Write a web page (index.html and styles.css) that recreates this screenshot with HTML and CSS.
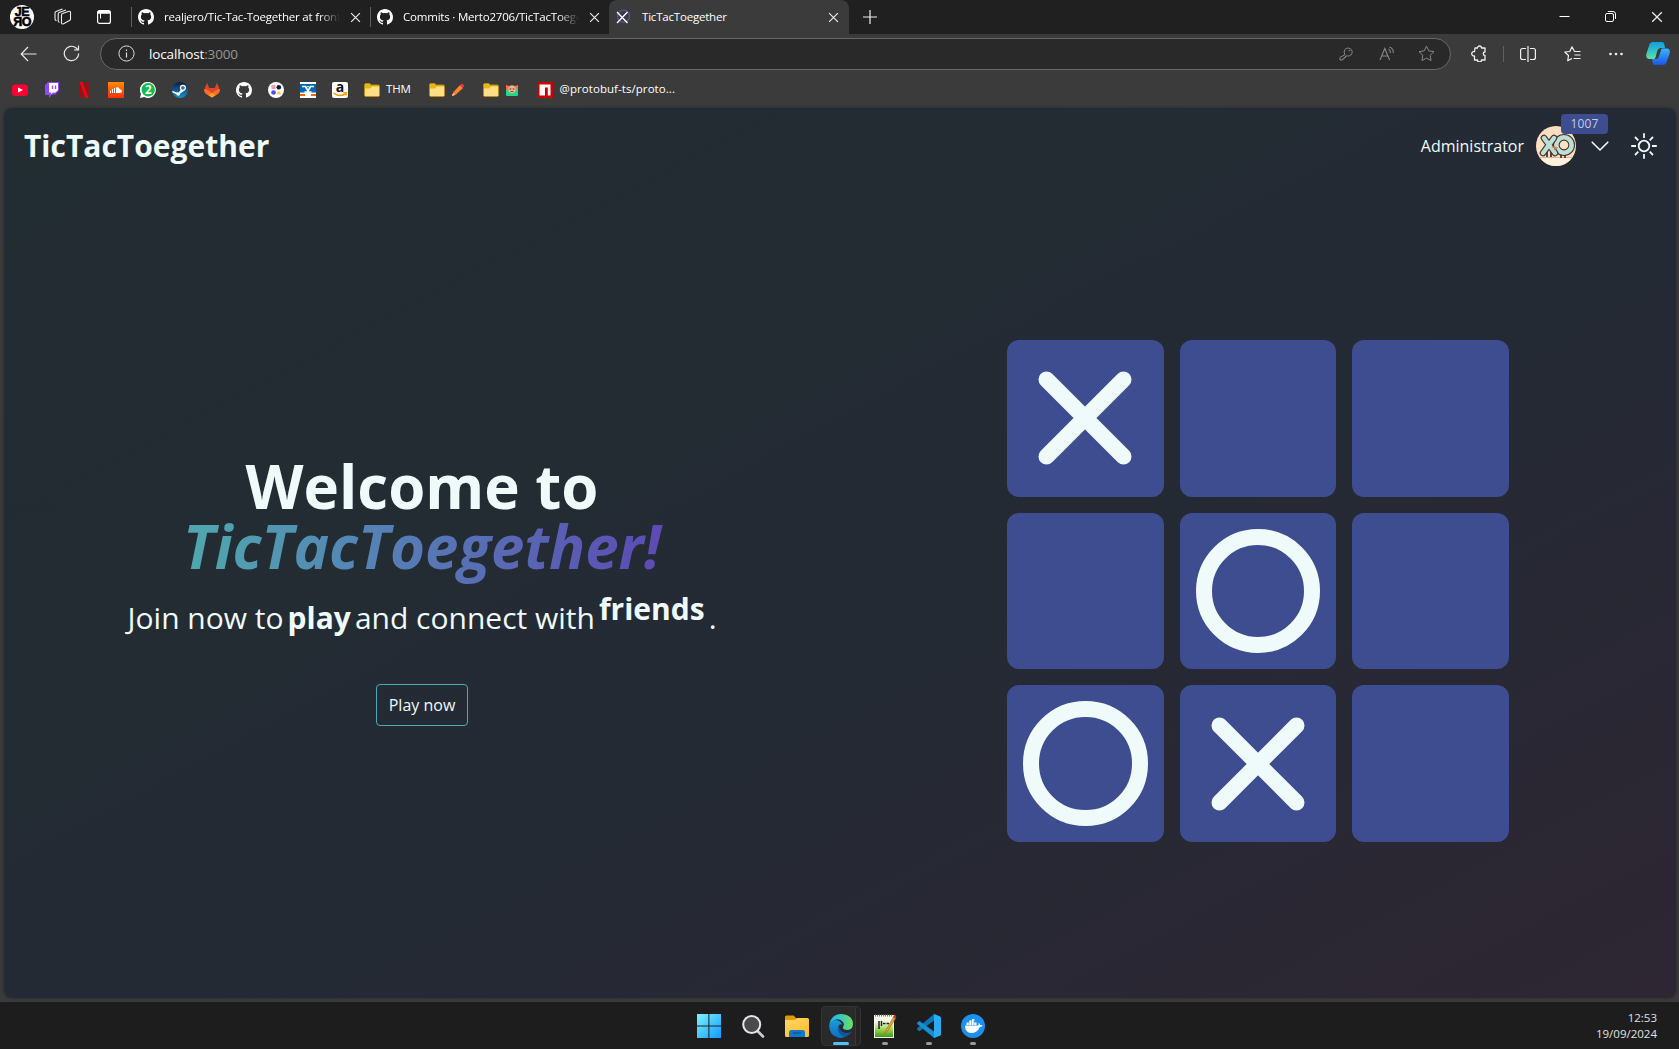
FILE: index.html
```html
<!DOCTYPE html>
<html lang="en">
<head>
<meta charset="utf-8">
<title>TicTacToegether</title>
<link rel="stylesheet" href="styles.css">
</head>
<body>
<svg width="0" height="0" class="defs" aria-hidden="true">
  <defs>
    <symbol id="github" viewBox="0 0 16 16"><path fill="#fff" d="M8 0C3.58 0 0 3.58 0 8c0 3.54 2.29 6.53 5.47 7.59.4.07.55-.17.55-.38v-1.34c-2.23.48-2.7-1.07-2.7-1.07-.36-.93-.89-1.18-.89-1.18-.73-.5.06-.49.06-.49.8.06 1.23.83 1.23.83.71 1.22 1.87.87 2.33.66.07-.52.28-.87.51-1.07-1.78-.2-3.64-.89-3.64-3.95 0-.87.31-1.59.82-2.15-.08-.2-.36-1.02.08-2.12 0 0 .67-.21 2.2.82a7.6 7.6 0 0 1 4 0c1.53-1.04 2.2-.82 2.2-.82.44 1.1.16 1.92.08 2.12.51.56.82 1.27.82 2.15 0 3.07-1.87 3.75-3.65 3.95.29.25.54.73.54 1.48v2.2c0 .21.15.46.55.38A8 8 0 0 0 16 8c0-4.42-3.58-8-8-8z"/></symbol>
    <symbol id="close" viewBox="0 0 10 10"><path d="M1 1l8 8M9 1L1 9" fill="none" stroke="#e8e8e8" stroke-width="1.1"/></symbol>
    <symbol id="folder" viewBox="0 0 16 14"><path d="M.5 2C.5 1 1 .5 2 .5h3.5L7.5 2H14c1 0 1.5.5 1.5 1.5V12c0 1-.5 1.5-1.5 1.5H2c-1 0-1.5-.5-1.5-1.5z" fill="#e8b51f" stroke="#b88d14"/><path d="M1 5.500h5L8 3.500h7V12.500q0 .5-.5.5h-13q-.5 0-.5-.5z" fill="#ffdf83"/></symbol>
    <symbol id="cross" viewBox="0 0 94 94"><path d="M8.500 8.500l77 77M85.500 8.500l-77 77" fill="none" stroke="#effafb" stroke-width="16" stroke-linecap="round"/></symbol>
    <linearGradient id="edgeA" x1="0" y1="0" x2="1" y2="0"><stop offset="0" stop-color="#23b7d8"/><stop offset=".4" stop-color="#30c5d0"/><stop offset="1" stop-color="#6fe05a"/></linearGradient>
    <linearGradient id="edgeB" x1="0" y1="0" x2="0" y2="1"><stop offset="0" stop-color="#1a9bdc"/><stop offset="1" stop-color="#0c6fc4"/></linearGradient>
    <linearGradient id="win" x1="0" y1="0" x2="1" y2="1"><stop offset="0" stop-color="#7cf2ff"/><stop offset="1" stop-color="#119aff"/></linearGradient>
    <linearGradient id="pilotA" x1="0" y1="0" x2="0" y2="1"><stop offset="0" stop-color="#0b9ee8"/><stop offset="1" stop-color="#5ee0a0"/></linearGradient>
    <linearGradient id="pilotB" x1="0" y1="0" x2="0" y2="1"><stop offset="0" stop-color="#36b5ff"/><stop offset="1" stop-color="#1c55e8"/></linearGradient>
    <linearGradient id="steam" x1="0" y1="0" x2="0" y2="1"><stop offset="0" stop-color="#0a1b48"/><stop offset="1" stop-color="#1593cf"/></linearGradient>
    <linearGradient id="cloud" x1="0" y1="0" x2="0" y2="1"><stop offset="0" stop-color="#ff8a00"/><stop offset="1" stop-color="#ff2b00"/></linearGradient>
    <linearGradient id="files" x1="0" y1="0" x2="1" y2="1"><stop offset="0" stop-color="#ffd866"/><stop offset="1" stop-color="#fdbb25"/></linearGradient>
    <linearGradient id="note" x1="0" y1="0" x2="0" y2="1"><stop offset="0" stop-color="#f6f7ef"/><stop offset=".3" stop-color="#f0f5dc"/><stop offset=".65" stop-color="#9bd24f"/><stop offset="1" stop-color="#3f9a1c"/></linearGradient>
  </defs>
</svg>

<div class="tabbar">
  <div class="profile"><span>JE</span><span>ЯO</span></div>
  <svg class="ico workspaces" width="18" height="18" viewBox="0 0 18 18"><g fill="none" stroke="#ededed" stroke-width="1.1" stroke-linejoin="round"><path d="M7.500 7q0-1 1-1.400l6.500-2.300q1.500-.3 1.500 1V11q0 1-1 1.500l-6 3.200q-2 .8-2-1z"/><path d="M5.500 14.500q-1.300-.5-1.300-1.700V6q0-1 1-1.400L12 2"/><path d="M2.500 12.800Q1 12.300 1 11V5q0-1 1-1.400L8.500 1"/></g></svg>
  <svg class="ico" width="16" height="16" viewBox="0 0 16 16"><rect x="1.600" y="1.600" width="12.800" height="12.800" rx="2" fill="none" stroke="#fff" stroke-width="1.200"/><path d="M1.600 3.200q0-1.600 1.600-1.600h9.600q1.600 0 1.600 1.600v1.600H1.600z" fill="#fff"/><path d="M4.500 4v5.500" stroke="#fff"/></svg>
  <div class="tab tab-first"><svg width="16" height="16"><use href="#github"/></svg><span class="tab-title faded">realjero/Tic-Tac-Toegether at front</span><svg width="11" height="11"><use href="#close"/></svg></div>
  <div class="tab"><svg width="16" height="16"><use href="#github"/></svg><span class="tab-title faded">Commits · Merto2706/TicTacToeget</span><svg width="11" height="11"><use href="#close"/></svg></div>
  <div class="tab active"><svg width="16" height="16" viewBox="0 0 16 16"><circle cx="8.500" cy="7.200" r="6" fill="none" stroke="#4558a8" stroke-width="1.300"/><path d="M2 3l10.500 11M12.500 3L2 14" stroke="#fff" stroke-width="1.300"/></svg><span class="tab-title">TicTacToegether</span><svg width="11" height="11"><use href="#close"/></svg></div>
  <svg class="newtab" width="14" height="14" viewBox="0 0 14 14"><path d="M7 0v14M0 7h14" stroke="#eee" stroke-width="1.200"/></svg>
  <div class="window-buttons">
    <svg width="11" height="11" viewBox="0 0 11 11"><path d="M.5 5.500h10" stroke="#fff"/></svg>
    <svg width="11" height="11" viewBox="0 0 11 11"><g fill="none" stroke="#fff"><rect x=".5" y="2.500" width="8" height="8" rx="1.500"/><path d="M2.800 .5H8q2.500 0 2.500 2.500v5"/></g></svg>
    <svg width="12" height="12"><use href="#close"/></svg>
  </div>
</div>

<div class="toolbar">
  <svg class="back" width="17" height="16" viewBox="0 0 17 16"><path d="M16.500 8H1.500M8 1L1.200 8 8 15" fill="none" stroke="#e8e8e8" stroke-width="1.200"/></svg>
  <svg class="reload" width="17" height="17" viewBox="0 0 17 17"><path d="M15.700 8.500a7.200 7.200 0 1 1-2.500-5.500l1.800 2M15.500 .5V5h-4.500" fill="none" stroke="#e8e8e8" stroke-width="1.200"/></svg>
  <div class="address">
    <svg width="17" height="17" viewBox="0 0 17 17"><circle cx="8.500" cy="8.500" r="7.600" fill="none" stroke="#ddd"/><path d="M8.500 7.500v5M8.500 4.600v1.500" stroke="#ddd" stroke-width="1.200"/></svg>
    <span class="url">localhost<em>:3000</em></span>
    <svg class="key" width="15" height="15" viewBox="0 0 15 15"><path d="M6 8.500A4 4 0 1 1 8.500 10L6.500 10v1.500H5V13H3.500v1H1v-2.500z" fill="none" stroke="#888"/><circle cx="10.500" cy="4.500" r=".8" fill="#888"/></svg>
    <svg class="read" width="16" height="15" viewBox="0 0 16 15"><path d="M1 14L5.800 2.500 10.600 14M2.800 10h6M9.500 3q2 1 2 4M10.500 1q4 1.500 3.800 6" fill="none" stroke="#888" stroke-width="1.100"/></svg>
    <svg class="star" width="17" height="17" viewBox="0 0 17 17"><path d="M8.500 1l2.300 4.900 5.200.7-3.800 3.700.9 5.300-4.600-2.500-4.600 2.500.9-5.300L1 6.600l5.200-.7z" fill="none" stroke="#888" stroke-linejoin="round"/></svg>
  </div>
  <div class="actions">
    <svg width="16" height="17" viewBox="0 0 16 17"><path d="M4 3h2.500a2 2 0 0 1 4 0H14v4a1.700 1.700 0 0 0 0 3.500V15h-3.500a2 2 0 0 1-4 0H3.500v-4a2.300 2.300 0 1 1 0-4.500z" fill="none" stroke="#f0f0f0" stroke-width="1.300" stroke-linejoin="round"/></svg>
    <i class="divider"></i>
    <svg class="split" width="16" height="16" viewBox="0 0 16 16"><path d="M6 2.500H2.500Q.6 2.500 .6 4.500v7q0 2 1.900 2H6M10 2.500h3.500q1.900 0 1.900 2v7q0 2-1.900 2H10M8 0v16" fill="none" stroke="#f0f0f0" stroke-width="1.200"/></svg>
    <svg class="favorites" width="17" height="16" viewBox="0 0 17 16"><path d="M10.500 5.500L8 .8 5.800 5.500.8 6l3.700 3.500-.8 5.300L8 12.500M10.500 5.500h6M10.500 9h6M9.500 12.500h7" fill="none" stroke="#f0f0f0" stroke-width="1.200" stroke-linejoin="round"/></svg>
    <svg class="more" width="14" height="4" viewBox="0 0 14 4"><g fill="#f0f0f0"><circle cx="1.500" cy="2" r="1.300"/><circle cx="7" cy="2" r="1.300"/><circle cx="12.500" cy="2" r="1.300"/></g></svg>
    <svg class="copilot" width="24" height="23" viewBox="0 0 24 23"><path d="M7 0h9q2 0 2.500 3l.5 3h-4q-3 0-4 4l-1.500 6q-.5 1-2 1H2.500Q-.5 16 .3 12L3 4q1-4 4-4z" fill="url(#pilotA)"/><path d="M17 23H9q-2 0-2.500-3L6 17h3q3 0 4-4l1.500-5q.5-1.500 2-1.500h5Q24.500 7 23.800 11L21 19q-1 4-4 4z" fill="url(#pilotB)"/><path d="M12.500 7.500h2.800L12 16.500H9.300z" fill="#3b3b3b"/></svg>
  </div>
</div>

<div class="bookmarks">
  <svg width="16" height="16" viewBox="0 0 16 16"><rect y="2.500" width="16" height="11.500" rx="3" fill="#ff0033"/><path d="M6 5.500l5 2.500-5 2.500z" fill="#fff"/></svg>
  <svg width="16" height="16" viewBox="0 0 16 16"><path d="M1 3l3-3h11v8.500l-4 4H8L5 16v-3H1z" fill="#9146ff"/><path d="M5 1h9v7l-2.500 2.500H9L7 12.300v-1.800H5z" fill="#fff"/><path d="M8.500 3.500v3.500M11.500 3.500v3.500" stroke="#9146ff" stroke-width="1.300"/></svg>
  <svg width="16" height="16" viewBox="0 0 16 16"><path d="M3.500 0h3v16l-3 .2zM9.500 0h3v16h-3z" fill="#b1060f"/><path d="M3.500 0h3.200l5.800 16H9.300z" fill="#e50914"/></svg>
  <svg width="16" height="16" viewBox="0 0 16 16"><path d="M0 0h16v16H0z" fill="url(#cloud)"/><path d="M2.500 8.500v2.500M4.500 7v4M6.500 6v5" stroke="#fff"/><path d="M8 5.500q3-1 4 2 2-.3 2 1.700t-2 1.800H8z" fill="#fff"/></svg>
  <svg width="16" height="16" viewBox="0 0 16 16"><path d="M0 16l1-4a8 8 0 1 1 3.200 3z" fill="#fff"/><circle cx="8.200" cy="7.800" r="6.700" fill="#12bc48"/><text x="8.200" y="12" text-anchor="middle" class="glyph" font-size="11.500" fill="#fff">2</text></svg>
  <svg width="16" height="16" viewBox="0 0 16 16"><circle cx="8" cy="8" r="8" fill="url(#steam)"/><path d="M.1 8.700l4.600 1.800q1-.7 2 0L9.500 7l3 1.500-4.200 3q-.2 2.300-2 2.300-1.800 0-2.200-1.700L.6 10.500z" fill="#fff"/><circle cx="10.900" cy="5.800" r="2.500" fill="#4c7199" stroke="#fff" stroke-width="1.200"/></svg>
  <svg width="16" height="16" viewBox="0 0 16 16"><path d="M3 .8L5.200 6h5.600L13 .8 15.500 7q1 3-1.500 4.800L8 15.500 2 11.800Q-.5 10 .5 7z" fill="#e24329"/><path d="M.5 7Q3 7 8 11q5-4 7.500-4 1 3-1.500 4.800L8 15.500 2 11.800Q-.5 10 .5 7z" fill="#fc6d26"/><path d="M4.500 13.200L8 11l3.500 2.200L8 15.500z" fill="#fca326"/></svg>
  <svg width="16" height="16"><use href="#github"/></svg>
  <svg width="16" height="16" viewBox="0 0 16 16"><circle cx="8" cy="8" r="8" fill="#fff"/><rect x="3.500" y="3" width="4" height="4" fill="#f59ab5"/><circle cx="10.800" cy="5.300" r="2.300" fill="#191536"/><circle cx="5.500" cy="10.500" r="2.300" fill="#4c50f0"/><path d="M11 8.500l2.300 4H8.700z" fill="#ffc65c"/></svg>
  <svg width="16" height="16" viewBox="0 0 16 16"><path fill="#fff" d="M0 0h16v16H0z"/><path fill="#0066b3" d="M0 2h16v8.500H0z"/><path fill="#ff6600" d="M0 12h5v2H0zM11 12h5v2h-5z"/><path d="M2 4.500h3.500L8 9l2.500-4.500H14M8 9v5M4.500 10h7" fill="none" stroke="#fff" stroke-width="1.700"/><path d="M7 4h2L8 6z" fill="#fff"/></svg>
  <svg width="16" height="16" viewBox="0 0 16 16"><rect width="16" height="16" rx="2" fill="#fff"/><text x="8" y="9.500" text-anchor="middle" class="glyph" font-size="14" fill="#111">a</text><path d="M1.500 11q6 4.500 11.500 1M11.500 10.700l2.800.2-.6 2.600" fill="none" stroke="#ff9900" stroke-width="1.500"/></svg>
  <div class="bm"><svg width="16" height="14"><use href="#folder"/></svg><span>THM</span></div>
  <div class="bm"><svg width="16" height="14"><use href="#folder"/></svg><svg width="14" height="14" viewBox="0 0 14 14"><path d="M1 13l1.500-4L9 2l3 3-7 6.500z" fill="#ff822d"/><path d="M8.800 2.200l2-1.500q1.500 0 2.300 2.300l-1.500 2z" fill="#f8314f"/><path d="M1 13l1-3 2 2z" fill="#ffce7c"/></svg></div>
  <div class="bm"><svg width="16" height="14"><use href="#folder"/></svg><svg width="14" height="14" viewBox="0 0 14 14"><path d="M1 2l3 1 3-1 3 1 3-1v5H1z" fill="#f8724b"/><path d="M1 7l12-1v6q0 1-1 1H2q-1 0-1-1z" fill="#1fd98b"/><circle cx="7" cy="6.500" r="3.700" fill="#f5b28f"/><circle cx="5.500" cy="6" r=".8" fill="#4a3c50"/><circle cx="8.500" cy="6" r=".8" fill="#4a3c50"/><path d="M5.500 8.500h3" stroke="#a33"/></svg></div>
  <div class="bm npm"><svg width="16" height="16" viewBox="0 0 16 16"><path fill="#cb0000" d="M0 0h16v16H0z"/><path fill="#fff" d="M2.500 2.500h11v11h-2.700V5.500H8v8H2.500z"/></svg><span>@protobuf-ts/proto...</span></div>
</div>

<main class="page">
  <header class="site-header">
    <h1>TicTacToegether</h1>
    <div class="user">
      <span>Administrator</span>
      <div class="avatar">
        <svg width="40" height="40" viewBox="0 0 40 40"><circle cx="20" cy="20" r="20" fill="#ffdfc0"/><path d="M3.500 31h33A20 20 0 0 1 20 40 20 20 0 0 1 3.500 31z" fill="#fff0d9"/><path d="M4 31.500h32" stroke="#e8b49c"/><path d="M11 25v6M15 25v6M25 27v5M29 27v5" stroke="#693f38" stroke-width="2"/><g fill="none" stroke-linecap="round"><circle cx="28" cy="19" r="7.700" stroke="#443336" stroke-width="6.800"/><circle cx="28" cy="19" r="7.700" stroke="#bde0d4" stroke-width="4.600"/><path d="M8 12l11 15M18 12L7 27" stroke="#443336" stroke-width="6.600"/><path d="M8 12l11 15M18 12L7 27" stroke="#bde0d4" stroke-width="4.400"/></g><path d="M16 20.500l4.500 1.500-2.500 2" fill="none" stroke="#d77c45" stroke-width="1.500"/></svg>
        <b class="badge">1007</b>
      </div>
      <svg class="chevron" width="18" height="11" viewBox="0 0 18 11"><path d="M1.200 1.200L9 9l7.800-7.800" fill="none" stroke="#effafb" stroke-width="1.600" stroke-linecap="round" stroke-linejoin="round"/></svg>
      <svg class="sun" width="28" height="28" viewBox="0 0 28 28"><g fill="none" stroke="#effafb" stroke-width="1.800"><circle cx="14" cy="14" r="5.300"/><path d="M14 1.200v4.800M14 22v4.800M1.200 14H6M22 14h4.800M5 5l3.300 3.300M19.700 19.700L23 23M5 23l3.300-3.300M19.700 8.300L23 5"/></g></svg>
    </div>
  </header>
  <div class="columns">
    <section class="hero">
      <h2>Welcome to<br><em>TicTacToegether!</em></h2>
      <p><span>Join now to</span><strong>play</strong><span>and connect with</span><strong class="bounce">friends</strong><span>.</span></p>
      <button>Play now</button>
    </section>
    <section class="board-wrap">
      <div class="board">
        <div class="cell"><svg width="94" height="94"><use href="#cross"/></svg></div><div class="cell"></div><div class="cell"></div>
        <div class="cell"></div><div class="cell"><i class="ring"></i></div><div class="cell"></div>
        <div class="cell"><i class="ring"></i></div><div class="cell"><svg width="94" height="94"><use href="#cross"/></svg></div><div class="cell"></div>
      </div>
    </section>
  </div>
</main>

<footer class="taskbar">
  <div class="apps">
    <div class="app"><svg width="24" height="24" viewBox="0 0 24 24"><path fill="url(#win)" d="M0 0h11.400v11.400H0zM12.400 0H24v11.400H12.400zM0 12.400h11.400V24H0zM12.400 12.400H24V24H12.400z"/></svg></div>
    <div class="app"><svg width="24" height="24" viewBox="0 0 24 24"><path d="M16.500 17l5.500 5.500" stroke="#c9cdd2" stroke-width="2.600" stroke-linecap="round"/><circle cx="10.700" cy="10.500" r="8.500" fill="#4a4a4c" stroke="#e4e6e8" stroke-width="2"/></svg></div>
    <div class="app"><svg width="24" height="24" viewBox="0 0 24 24"><path d="M0 3q0-1.500 1.500-1.500h7L11 4v4H0z" fill="#e09a0b"/><path d="M0 6h9.500L12 4h10.500Q24 4 24 5.500v16q0 1.500-1.500 1.500h-21Q0 23 0 21.500z" fill="url(#files)"/><path d="M4 23v-4.500Q4 16 6.500 16h11q2.500 0 2.500 2.500V23z" fill="#1277c9"/><path d="M8 19h8" stroke="#075292" stroke-width="1.300"/></svg></div>
    <div class="app current"><svg width="24" height="24" viewBox="0 0 24 24"><path d="M7 12q-1 7 5 10.500 5 2 9.800-3.500.6-1.300-.8-.8-5 1.800-8.800-1.200-2.700-2.500-1.700-6z" fill="#0d57a0"/><path d="M.1 11.500Q2 0 12.500 0 24 1 24 10.500q-.5 5.500-6.500 5.500-4.500-.5-3.500-3 2-3-.5-5.500Q9 3.500 3.500 7 .5 9 .1 11.500z" fill="url(#edgeA)"/><path d="M.1 12Q1 6 6.500 6q6 .5 7 5.500-1.500-2-3.500-.5-2.500 3.500 0 8 3 4 7 3.500Q13.500 24.500 9.500 23.700.5 21.500.1 12z" fill="url(#edgeB)"/></svg></div>
    <div class="app open"><svg width="24" height="24" viewBox="0 0 24 24"><path d="M1 1h20v23H1z" fill="#f3f5e8"/><path d="M2 2h18v21H2z" fill="url(#note)"/><path d="M2 1.500h18" stroke="#777" stroke-width="2" stroke-dasharray="1 1"/><path d="M6 7v8M8.500 7v5M10 9.500h2.500M13.500 9.500H16" stroke="#222" stroke-width="1.500"/><path d="M12 18L20.500 3l2 1.500L14 18l-2.500 2z" fill="#e9a827" stroke="#9a6416" stroke-width=".6"/><path d="M20 3l1.300-2.500L23.500 2l-1.300 2.500z" fill="#c43a35"/></svg></div>
    <div class="app open"><svg width="24" height="24" viewBox="0 0 24 24"><path d="M17 0l7 3v18l-7 3V6.500L2.500 17.200.2 15.800v-1.600z" fill="#0877b9"/><path d="M.2 8.500L2.500 7 17 17.500V24L.2 10z" fill="#168ed2"/><path d="M17 0l6 2.500q1 .5 1 1.500v16q0 1-1 1.500L17 24z" fill="#2bacf2"/></svg></div>
    <div class="app open"><svg width="24" height="24" viewBox="0 0 24 24"><circle cx="12" cy="12" r="12" fill="#1d90ed"/><path d="M4 11.500h13q1-.5.500-2.500 1.500.5 1.700 2 1.500-.2 2.500.5-1 1.500-3 1.500-2.500 6-8.500 6-6 0-6.200-7.500z" fill="#fff"/><path d="M5.500 8.500h10v2.500h-10zM8 6.500h5v2H8zM11 5h2.500v2H11z" fill="#fff"/><path d="M8 6.500v4.500M10.500 6.500v4.500M13 5v6" stroke="#1d90ed" stroke-width=".5"/></svg></div>
  </div>
  <div class="clock"><span>12:53</span><span>19/09/2024</span></div>
</footer>
</body>
</html>
```
FILE: styles.css
```css
* { box-sizing: border-box; }
body { margin: 0; width: 1679px; height: 1049px; overflow: hidden; display: flex; flex-direction: column; background: #3b3b3b; color: #fff; font: 12px "Open Sans", "Noto Sans", sans-serif; }
svg { display: block; flex: none; }
.defs { position: absolute; }
.glyph { font-family: "Open Sans", sans-serif; font-weight: 700; }

.tabbar { height: 34px; flex: none; background: #202020; display: flex; align-items: center; }
.profile { width: 24px; height: 24px; margin-left: 10px; border-radius: 50%; background: #fff; color: #000; display: flex; flex-direction: column; align-items: center; justify-content: center; font: 900 12.500px/10px "Liberation Sans", sans-serif; letter-spacing: -.5px; }
.profile span { -webkit-text-stroke: .6px #000; }
.ico { margin-left: 25px; }
.workspaces { margin-left: 20px; }
.workspaces + .ico { margin-left: 24px; }
.tab { width: 239px; height: 34px; padding: 0 9px 0 6px; display: flex; align-items: center; gap: 10px; letter-spacing: -.2px; }
.tab::before { content: ""; width: 1px; height: 20px; background: #616161; margin-right: -4px; margin-left: -6px; }
.tab-first { margin-left: 19px; }
.tab-title { flex: 1; white-space: nowrap; overflow: hidden; font-size: 11.500px; line-height: 16px; padding-bottom: 1px; }
.faded { -webkit-mask-image: linear-gradient(90deg, #000 88%, transparent); mask-image: linear-gradient(90deg, #000 88%, transparent); }
.tab.active { width: 240px; padding-right: 10px; background: #3b3b3b; border-radius: 8px 8px 0 0; }
.tab.active svg:first-of-type { margin-left: -1px; margin-right: 1px; }
.tab.active::before { background: transparent; }
.newtab { margin-left: 14px; }
.window-buttons { margin-left: auto; margin-right: 16px; display: flex; gap: 35px; }

.toolbar { height: 39px; flex: none; display: flex; align-items: center; }
.back { margin-left: 20px; }
.reload { margin-left: 26px; }
.address { width: 1351px; height: 32px; margin-left: 20px; border: 1px solid #686868; border-radius: 16px; background: #292929; display: flex; align-items: center; padding: 0 15px 0 17px; }
.url { margin-left: 14px; flex: 1; font-size: 13.500px; letter-spacing: -.15px; }
.url em { font-style: normal; color: #969696; }
.read { margin-left: 25px; }
.star { margin-left: 23px; }
.actions { flex: 1; margin-left: 20px; display: flex; align-items: center; }
.divider { width: 1px; height: 16px; margin: 0 16px; background: #606060; }
.favorites { margin-left: 28px; }
.more { margin-left: 28px; }
.copilot { margin-left: 23px; }

.bookmarks { height: 35px; flex: none; display: flex; align-items: center; gap: 16px; padding: 0 0 1px 12px; }
.bm { display: flex; align-items: center; gap: 6px; font-size: 11.500px; letter-spacing: -.2px; line-height: 14px; }
.bm span { padding-bottom: 2px; }
.bm + .bm { margin-left: 2px; }
.bm.npm { gap: 7px; letter-spacing: .06px; }

.page { width: 1672px; height: 890px; flex: none; margin-left: 4px; border-radius: 8px; background: linear-gradient(to bottom right, #222d32, #242a34 58%, #2e2633); color: #effafb; display: flex; flex-direction: column; overflow: hidden; box-shadow: 0 0 3px #252525; }
.site-header { height: 76px; flex: none; padding: 0 18px 0 20px; display: flex; align-items: center; justify-content: space-between; }
h1 { margin: 0; font-size: 30px; line-height: 36px; font-weight: 700; }
.user { display: flex; align-items: center; font-size: 16px; }
.avatar { position: relative; margin-left: 12px; }
.badge { position: absolute; left: 25px; top: -12px; width: 47px; height: 20px; border-radius: 4px; background: #3d4d8f; color: #c3cbee; font: 12px/20px "Open Sans", sans-serif; text-align: center; letter-spacing: .1px; }
.chevron { margin-left: 15px; }
.sun { margin-left: 21px; }
.columns { flex: 1; display: grid; grid-template-columns: 1fr 1fr; align-items: center; }
.hero { display: flex; flex-direction: column; align-items: center; }
h2 { margin: 0; font-size: 60px; line-height: 60px; font-weight: 700; text-align: center; }
h2 em { display: inline-block; padding-bottom: 8px; padding-right: 4px; margin-right: -4px; background: linear-gradient(to right, #4fa9ae, #567db5 45%, #5d4ab3); -webkit-background-clip: text; background-clip: text; color: transparent; }
.hero p { display: flex; gap: 4px; margin: 16px 0 0; font-size: 30px; line-height: 36px; white-space: nowrap; }
.bounce { transform: translateY(-9px); }
button { margin-top: 48px; width: 92px; height: 42px; border: 1px solid #4fa9b5; border-radius: 4px; background: transparent; color: #effafb; font: 16px "Open Sans", sans-serif; padding: 0; white-space: nowrap; }
.board-wrap { display: flex; justify-content: center; }
.board { width: 502px; height: 502px; display: grid; grid-template: repeat(3, 1fr) / repeat(3, 1fr); gap: 16px; }
.cell { border-radius: 12px; background: #3d4d8f; display: flex; align-items: center; justify-content: center; }
.ring { width: 124.670px; height: 124.670px; border: 16px solid #effafb; border-radius: 50%; }

.taskbar { margin-top: 4px; height: 47px; flex: none; background: #1d1d1d; display: grid; grid-template-columns: 1fr auto 1fr; align-items: center; }
.apps { grid-column: 2; display: flex; gap: 4px; padding: 1px 0 0 2px; }
.app { position: relative; width: 40px; height: 40px; display: flex; align-items: center; justify-content: center; }
.current { background: linear-gradient(to right, #2a2a2a 34px, #363636 34px, #363636 35px, #242424 35px); border-radius: 5px; box-shadow: inset 0 0 0 1px #343434; }
.open::after, .current::after { content: ""; position: absolute; bottom: 1px; left: 17px; width: 6px; height: 3px; border-radius: 2px; background: #999; }
.current::after { width: 16px; left: 12px; background: #4cc2ff; }
.clock { justify-self: end; margin-right: 22px; display: flex; flex-direction: column; align-items: flex-end; font-size: 11.500px; line-height: 16px; letter-spacing: 0; color: #e0e0e0; }
```
